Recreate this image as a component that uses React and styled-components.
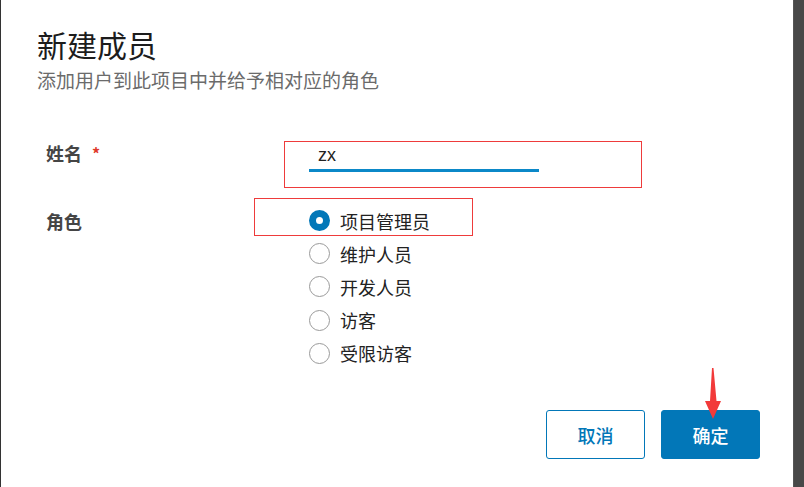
import React, { useState } from 'react'
import styled, { createGlobalStyle } from 'styled-components'

const GlobalStyle = createGlobalStyle`
    html, body, #root {
        margin: 0;
        height: 100%;
    }
    body {
        background: #474747;
        font-family: "Noto Sans CJK SC", "Noto Sans", sans-serif;
    }
`

const roles = ['项目管理员', '维护人员', '开发人员', '访客', '受限访客']

const App = () => {
    const [role, setRole] = useState(0)
    const [name, setName] = useState('zx')

    return (
        <Page>
            <GlobalStyle />
            <Dialog>
                <Title>新建成员</Title>
                <Subtitle>添加用户到此项目中并给予相对应的角色</Subtitle>

                <Form>
                    <NameRow>
                        <Label>姓名<Required>*</Required></Label>
                        <Control>
                            <Mark $left={-25} $top={0} $width={358} $height={47} />
                            <Input value={name} onChange={e => setName(e.target.value)} />
                        </Control>
                    </NameRow>

                    <RoleRow>
                        <Label $offset={5}>角色</Label>
                        <Control>
                            <Mark $left={-55} $top={-6} $width={219} $height={38} />
                            {roles.map((r, i) => (
                                <Option key={r} onClick={() => setRole(i)}>
                                    <Radio $checked={role === i} />
                                    <span>{r}</span>
                                </Option>
                            ))}
                        </Control>
                    </RoleRow>
                </Form>

                <Footer>
                    <Button>取消</Button>
                    <Button $primary>确定</Button>
                </Footer>

                <Arrow width="20" height="54" viewBox="0 0 20 54">
                    <polygon points="9,0 10.5,0 13.5,33 18,33 10,51 2,33 7,33" fill="#f23a3a" />
                </Arrow>
            </Dialog>
            <Side />
        </Page>
    )
}

const Page = styled.div`
    display: flex;
    height: 100vh;
`

const Dialog = styled.div`
    position: relative;
    flex: 1;
    background: #fff;
    border-left: 1px solid #333;
    padding: 26px 0 0 36px;
    display: flex;
    flex-direction: column;
`

const Side = styled.div`
    width: 10px;
    background: #484848;
    border-left: 1px solid #555;
`

const Title = styled.h1`
    margin: 0;
    font-size: 30px;
    line-height: 36px;
    font-weight: 400;
    color: #1c1c1c;
`

const Subtitle = styled.p`
    margin: 5px 0 0;
    font-size: 19px;
    line-height: 25px;
    color: #6b6b6b;
`

const Form = styled.div`
    margin-top: 49px;
    padding-left: 9px;
    display: flex;
    flex-direction: column;
    gap: 16px;
`

const NameRow = styled.div`
    display: grid;
    grid-template-columns: 263px 1fr;
    height: 47px;
`

const RoleRow = styled(NameRow)`
    height: auto;
`

const Label = styled.div`
    font-size: 18px;
    line-height: 24px;
    font-weight: 700;
    color: #454545;
    margin-top: ${p => p.$offset || 0}px;
`

const Required = styled.span`
    color: #e0392b;
    font-size: 16px;
    margin-left: 10px;
    vertical-align: top;
`

const Control = styled.div`
    position: relative;
    display: flex;
    flex-direction: column;
`

const Mark = styled.div`
    position: absolute;
    left: ${p => p.$left}px;
    top: ${p => p.$top}px;
    width: ${p => p.$width}px;
    height: ${p => p.$height}px;
    border: 1px solid #ee3b3b;
    box-sizing: border-box;
    pointer-events: none;
`

const Input = styled.input`
    width: 230px;
    height: 31px;
    box-sizing: border-box;
    border: 0;
    border-bottom: 3px solid #0b88c8;
    padding: 0 0 0 9px;
    font-family: "Liberation Sans", "Noto Sans", sans-serif;
    font-size: 18px;
    color: #222;
    outline: none;
    background: transparent;
`

const Option = styled.label`
    display: flex;
    align-items: center;
    gap: 10px;
    height: 33.2px;
    font-size: 18px;
    line-height: 24px;
    color: #222;
    cursor: pointer;
`

const Radio = styled.span`
    width: 21px;
    height: 21px;
    box-sizing: border-box;
    border-radius: 50%;
    border: ${p => (p.$checked ? '7.5px solid #0277b8' : '1px solid #9a9a9a')};
    background: #fff;
    flex-shrink: 0;
`

const Footer = styled.div`
    margin-top: auto;
    margin-bottom: 28px;
    padding-right: 33px;
    display: flex;
    justify-content: flex-end;
    gap: 16px;
`

const Button = styled.button`
    width: 99px;
    height: 49px;
    border-radius: 3px;
    border: 1px solid #0277b8;
    background: ${p => (p.$primary ? '#0277b8' : '#fff')};
    color: ${p => (p.$primary ? '#fff' : '#0277b8')};
    font-family: "Noto Sans CJK SC", sans-serif;
    font-size: 18px;
    font-weight: 500;
    cursor: pointer;
`

const Arrow = styled.svg`
    position: absolute;
    left: 702px;
    top: 368px;
`

export default App
